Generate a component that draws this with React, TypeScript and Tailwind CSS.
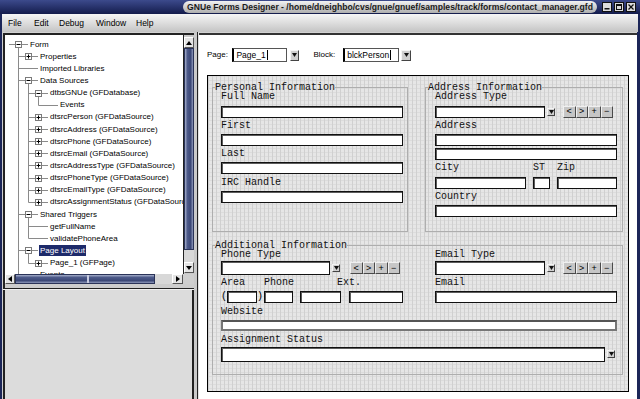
import React from "react";

type Row = { d: number; t: string; b?: "+" | "-"; last?: boolean; sel?: boolean };

const rows: Row[] = [
  { d: 0, t: "Form", b: "-", last: true },
  { d: 1, t: "Properties", b: "+" },
  { d: 1, t: "Imported Libraries" },
  { d: 1, t: "Data Sources", b: "-" },
  { d: 2, t: "dtbsGNUe (GFDatabase)", b: "-" },
  { d: 3, t: "Events", last: true },
  { d: 2, t: "dtsrcPerson (GFDataSource)", b: "+" },
  { d: 2, t: "dtsrcAddress (GFDataSource)", b: "+" },
  { d: 2, t: "dtsrcPhone (GFDataSource)", b: "+" },
  { d: 2, t: "dtsrcEmail (GFDataSource)", b: "+" },
  { d: 2, t: "dtsrcAddressType (GFDataSource)", b: "+" },
  { d: 2, t: "dtsrcPhoneType (GFDataSource)", b: "+" },
  { d: 2, t: "dtsrcEmailType (GFDataSource)", b: "+" },
  { d: 2, t: "dtsrcAssignmentStatus (GFDataSource)", b: "+", last: true },
  { d: 1, t: "Shared Triggers", b: "-" },
  { d: 2, t: "getFullName" },
  { d: 2, t: "validatePhoneArea", last: true },
  { d: 1, t: "Page Layout", b: "-", sel: true },
  { d: 2, t: "Page_1 (GFPage)", b: "+", last: true },
  { d: 1, t: "Events" },
];

const LC = "#8a8a8a";

function Tree() {
  const path: boolean[] = [];
  const H = 12.15;
  const mid = 6.5;
  return (
    <div className="pt-[3px]">
      {rows.map((r, i) => {
        path[r.d] = !!r.last;
        const w = 25 + 10 * r.d;
        const els: React.ReactNode[] = [];
        for (let k = 0; k <= r.d - 2; k++) {
          if (!path[k + 1]) {
            const x = 13.5 + 10 * k;
            els.push(<line key={"v" + k} x1={x} x2={x} y1={0} y2={H + 1} stroke={LC} />);
          }
        }
        if (r.d >= 1) {
          const px = 13.5 + 10 * (r.d - 1);
          els.push(<line key="pv" x1={px} x2={px} y1={0} y2={r.last ? mid : H + 1} stroke={LC} />);
          els.push(<line key="ph" x1={px} x2={23 + 10 * r.d} y1={mid} y2={mid} stroke={LC} />);
        } else {
          els.push(<line key="ph" x1={4} x2={23} y1={mid} y2={mid} stroke={LC} />);
        }
        if (r.b) {
          const cx = 13.5 + 10 * r.d;
          if (r.b === "-") {
            els.push(<line key="dn" x1={cx} x2={cx} y1={mid} y2={H + 1} stroke={LC} />);
          }
          els.push(<rect key="bx" x={cx - 3} y={3.5} width={6} height={6} fill="#fff" stroke="#7a7a7a" />);
          els.push(<line key="s1" x1={cx - 2} x2={cx + 2} y1={mid} y2={mid} stroke="#000" />);
          if (r.b === "+") {
            els.push(<line key="s2" x1={cx} x2={cx} y1={mid - 2} y2={mid + 2} stroke="#000" />);
          }
        }
        return (
          <div key={i} className="flex items-center h-[12.15px] whitespace-nowrap">
            <svg width={w} height={H} className="shrink-0 overflow-visible">
              {els}
            </svg>
            <span
              className={
                r.sel
                  ? "text-[8px] leading-[11px] bg-[#1d2a6a] text-white px-[1px] -ml-[1px]"
                  : "text-[8px] leading-[11px] text-black"
              }
            >
              {r.t}
            </span>
          </div>
        );
      })}
    </div>
  );
}

function Tri({ dir }: { dir: "up" | "down" | "left" | "right" }) {
  const pts =
    dir === "up"
      ? "0,4 3,0 6,4"
      : dir === "down"
      ? "0,0 6,0 3,4"
      : dir === "left"
      ? "4,0 4,6 0,3"
      : "0,0 0,6 4,3";
  const w = dir === "up" || dir === "down" ? 6 : 4;
  const h = dir === "up" || dir === "down" ? 4 : 6;
  return (
    <svg width={w} height={h}>
      <polygon points={pts} fill="#000" />
    </svg>
  );
}

function ArrowBtn({ cls }: { cls: string }) {
  return (
    <div
      className={
        "flex items-center justify-center bg-[#cfcfcf] border border-t-[#f4f4f4] border-l-[#f4f4f4] border-b-[#444] border-r-[#444] shrink-0 " +
        cls
      }
    >
      <svg width="5" height="4">
        <polygon points="0,0 5,0 2.5,4" fill="#111" />
      </svg>
    </div>
  );
}

function NavBtns({ cls }: { cls: string }) {
  return (
    <div className={"flex shrink-0 " + cls}>
      {["<", ">", "+", "−"].map((c) => (
        <div
          key={c}
          className="w-[12.5px] h-[12px] flex items-center justify-center bg-[#c6c6c6] border border-t-[#f0f0f0] border-l-[#f0f0f0] border-b-[#4a4a4a] border-r-[#4a4a4a] text-[9px] leading-none text-black font-['Liberation_Sans',Arial,sans-serif]"
        >
          {c}
        </div>
      ))}
    </div>
  );
}

const lbl = "h-[9px] leading-[9px] text-[10px] text-[#111] font-['Liberation_Mono',monospace] whitespace-nowrap";
const inp = "bg-white border border-[#111] shadow-[inset_1px_1px_0_#5c5c5c] shrink-0";
const frame = "border border-[#aeaeae] shrink-0";
const legend = "ml-[2px] leading-[9px] text-[10px] text-[#111] font-['Liberation_Mono',monospace] whitespace-nowrap";

function WinBtn({ kind }: { kind: "min" | "max" | "close" }) {
  return (
    <div className="w-[10px] h-[10px] bg-[#dcdcdc] border border-[#111] flex items-center justify-center">
      <svg width="6" height="6">
        {kind === "min" && <rect x="0.5" y="4" width="5" height="1.5" fill="#111" />}
        {kind === "max" && <rect x="0.5" y="0.5" width="5" height="5" fill="none" stroke="#111" strokeWidth="1" />}
        {kind === "max" && <rect x="0.5" y="0.5" width="5" height="1.5" fill="#111" />}
        {kind === "close" && (
          <g stroke="#111" strokeWidth="1.3">
            <line x1="0.5" y1="0.5" x2="5.5" y2="5.5" />
            <line x1="5.5" y1="0.5" x2="0.5" y2="5.5" />
          </g>
        )}
      </svg>
    </div>
  );
}

export default function App() {
  return (
    <div className="w-[640px] h-[399px] overflow-hidden flex flex-col bg-[#1c2658] font-['Liberation_Sans',Arial,sans-serif] text-black">
      {/* Title bar */}
      <div className="h-[14px] shrink-0 flex items-center justify-end pr-[4px] bg-[image:linear-gradient(180deg,#3c4a8c,#141c4c)]">
        <div className="w-[414px] h-[12px] rounded-full bg-[image:linear-gradient(180deg,#f2f2f2,#aeaeae)] flex items-center justify-center overflow-hidden whitespace-nowrap text-[8.6px] font-bold text-[#1a1a1a]">
          GNUe Forms Designer - /home/dneighbo/cvs/gnue/gnuef/samples/track/forms/contact_manager.gfd
        </div>
        <div className="ml-[5px] flex gap-[2px]">
          <WinBtn kind="min" />
          <WinBtn kind="max" />
          <WinBtn kind="close" />
        </div>
      </div>

      {/* Menu bar */}
      <div className="h-[18px] shrink-0 mx-[2px] flex items-center pl-[6px] bg-[image:linear-gradient(180deg,#f6f6f6,#c4c4c4)] text-[8.5px] text-black">
        <span className="w-[26px]">File</span>
        <span className="w-[25px]">Edit</span>
        <span className="w-[37px]">Debug</span>
        <span className="w-[40px]">Window</span>
        <span>Help</span>
      </div>

      {/* Body */}
      <div className="flex h-[367px] bg-[#d2d2d2]">
        <div className="w-[2px] bg-[#1c2658]" />
        <div className="w-[1px] bg-[#cfcfcf]" />

        {/* Left pane */}
        <div className="w-[191px] flex flex-col pt-[1px]">
          <div className="h-[251px] border-t-2 border-l-2 border-[#222] flex flex-col">
            <div className="flex h-[239px]">
              <div className="w-[178px] bg-white overflow-hidden">
                <Tree />
              </div>
              <div className="w-[11px] flex flex-col bg-[#c9c9c9] border-l border-[#222] pt-[2px]">
                <div className="h-[11px] flex items-center justify-center bg-[#e4e4e4] border border-t-white border-l-white border-b-[#555] border-r-[#555]">
                  <Tri dir="up" />
                </div>
                <div className="h-[202px] bg-[image:linear-gradient(90deg,#a7b0cc,#4d5a8a_30%,#3b4776_70%,#8c97ba)] border border-[#2a3358]" />
                <div className="h-[12px] bg-[#d8d8d8]" />
                <div className="h-[11px] flex items-center justify-center bg-[#e4e4e4] border border-t-white border-l-white border-b-[#555] border-r-[#555]">
                  <Tri dir="down" />
                </div>
              </div>
            </div>
            <div className="flex h-[10px]">
              <div className="w-[10px] flex items-center justify-center bg-[#e4e4e4] border border-t-white border-l-white border-b-[#555] border-r-[#555]">
                <Tri dir="left" />
              </div>
              <div className="w-[140px] flex bg-[image:linear-gradient(180deg,#a7b0cc,#4d5a8a_30%,#3b4776_70%,#8c97ba)] border border-[#2a3358]">
                <div className="w-[71px]" />
                <div className="w-[2px] bg-[#c8cce0]" />
              </div>
              <div className="w-[17px] bg-[#d8d8d8]" />
              <div className="w-[11px] flex items-center justify-center bg-[#e4e4e4] border border-t-white border-l-white border-b-[#555] border-r-[#555]">
                <Tri dir="right" />
              </div>
              <div className="w-[11px] bg-[#cfcfcf]" />
            </div>
          </div>
          <div className="h-[4px] border-l-2 border-[#222] bg-[#cdcdcd]" />
          <div className="h-[1px] bg-[#222]" />
          <div className="h-[1px] bg-[#f0f0f0]" />
          <div className="flex-1 bg-[#dcdcdc] border-l-2 border-r-2 border-[#222]" />
        </div>

        <div className="w-[3px] bg-[#cacaca]" />
        <div className="w-[1px] bg-[#222]" />
        <div className="w-[1px] bg-[#e2e2e2]" />

        {/* Right pane */}
        <div className="w-[438px] mt-[1px] bg-white border-t-2 border-[#333] flex flex-col pl-[8px]">
          <div className="h-[40px] flex items-center text-[8px]">
            <span>Page:</span>
            <div className="ml-[4.5px] w-[55px] h-[14px] bg-white border border-[#555] border-l-2 border-l-black flex items-center pl-[2px] text-[8.5px]">
              Page_1
              <span className="ml-[1px] w-[1px] h-[10px] bg-black" />
            </div>
            <ArrowBtn cls="ml-[3px] w-[9px] h-[11px]" />
            <span className="ml-[14px]">Block:</span>
            <div className="ml-[8px] w-[56px] h-[14px] bg-white border border-[#555] border-l-2 border-l-black flex items-center pl-[2px] text-[8.5px]">
              blckPerson
              <span className="ml-[1px] w-[1px] h-[10px] bg-black" />
            </div>
            <ArrowBtn cls="ml-[2px] w-[10px] h-[11px]" />
          </div>

          {/* Canvas */}
          <div className="w-[422px] h-[317px] border border-black bg-[#e6e6e6] bg-[image:linear-gradient(90deg,#d0d0d0_1px,transparent_1px),linear-gradient(180deg,#dcdcdc_1px,transparent_1px)] bg-[size:4px_4px] pt-[7px] pl-[4px]">
            <div className="flex gap-[17px]">
              {/* Personal Information */}
              <fieldset className={frame + " w-[196px] h-[149px]"}>
                <legend className={legend}>Personal Information</legend>
                <div className="pl-[8px]">
                  <div className={lbl}>Full Name</div>
                  <div className={inp + " mt-[4.5px] w-[182px] h-[12px]"} />
                  <div className={lbl + " mt-[3px]"}>First</div>
                  <div className={inp + " mt-[4px] w-[182px] h-[12px]"} />
                  <div className={lbl + " mt-[3.5px]"}>Last</div>
                  <div className={inp + " mt-[4px] w-[182px] h-[12px]"} />
                  <div className={lbl + " mt-[3.5px]"}>IRC Handle</div>
                  <div className={inp + " mt-[4px] w-[182px] h-[12px]"} />
                </div>
              </fieldset>

              {/* Address Information */}
              <fieldset className={frame + " w-[198px] h-[149px]"}>
                <legend className={legend}>Address Information</legend>
                <div className="pl-[9px]">
                  <div className={lbl}>Address Type</div>
                  <div className="mt-[4.5px] flex items-center h-[12px]">
                    <div className={inp + " w-[110px] h-[12px]"} />
                    <ArrowBtn cls="ml-[2px] w-[8px] h-[8px]" />
                    <NavBtns cls="ml-[8px]" />
                  </div>
                  <div className={lbl + " mt-[3px]"}>Address</div>
                  <div className={inp + " mt-[4px] w-[182px] h-[12px]"} />
                  <div className={inp + " mt-[2.5px] w-[182px] h-[12px]"} />
                  <div className={lbl + " mt-[3px] flex"}>
                    <span className="w-[98px]">City</span>
                    <span className="w-[24px]">ST</span>
                    <span>Zip</span>
                  </div>
                  <div className="mt-[4.5px] flex">
                    <div className={inp + " w-[91px] h-[12px]"} />
                    <div className={inp + " ml-[7px] w-[17px] h-[12px]"} />
                    <div className={inp + " ml-[7px] w-[60px] h-[12px]"} />
                  </div>
                  <div className={lbl + " mt-[3px]"}>Country</div>
                  <div className={inp + " mt-[4.5px] w-[182px] h-[12px]"} />
                </div>
              </fieldset>
            </div>

            {/* Additional Information */}
            <fieldset className={frame + " mt-[9px] w-[411px] h-[134px]"}>
              <legend className={legend}>Additional Information</legend>
              <div className="pl-[8px]">
                <div className="grid grid-cols-[182px_182px] gap-x-[32px]">
                  <div>
                    <div className={lbl}>Phone Type</div>
                    <div className="mt-[2px] flex items-center h-[14px]">
                      <div className={inp + " w-[109px] h-[14px]"} />
                      <ArrowBtn cls="ml-[2px] w-[8px] h-[8px]" />
                      <NavBtns cls="ml-[10px]" />
                    </div>
                    <div className={lbl + " mt-[2.5px] flex"}>
                      <span className="w-[43px]">Area</span>
                      <span className="w-[73px]">Phone</span>
                      <span>Ext.</span>
                    </div>
                    <div className="mt-[4px] flex items-center h-[12px] text-[10px] font-['Liberation_Mono',monospace]">
                      <span className="w-[6px] leading-none">(</span>
                      <div className={inp + " w-[30px] h-[12px]"} />
                      <span className="w-[7px] leading-none">)</span>
                      <div className={inp + " w-[29px] h-[12px]"} />
                      <div className={inp + " ml-[7px] w-[41px] h-[12px]"} />
                      <div className={inp + " ml-[8px] w-[54px] h-[12px]"} />
                    </div>
                  </div>
                  <div>
                    <div className={lbl}>Email Type</div>
                    <div className="mt-[2px] flex items-center h-[14px]">
                      <div className={inp + " w-[110px] h-[14px]"} />
                      <ArrowBtn cls="ml-[2px] w-[8px] h-[8px]" />
                      <NavBtns cls="ml-[8px]" />
                    </div>
                    <div className={lbl + " mt-[2.5px]"}>Email</div>
                    <div className={inp + " mt-[4px] w-[182px] h-[12px]"} />
                  </div>
                </div>
                <div className={lbl + " mt-[4px]"}>Website</div>
                <div className="mt-[4.5px] w-[396px] h-[11px] bg-white border-2 border-[#777] border-t-[#555]" />
                <div className={lbl + " mt-[3.5px]"}>Assignment Status</div>
                <div className="mt-[3px] flex items-center h-[15px]">
                  <div className={inp + " w-[384px] h-[15px]"} />
                  <ArrowBtn cls="ml-[2px] w-[8px] h-[8px]" />
                </div>
              </div>
            </fieldset>
          </div>
        </div>

        <div className="w-[3px] bg-[#1c2658]" />
      </div>
    </div>
  );
}
